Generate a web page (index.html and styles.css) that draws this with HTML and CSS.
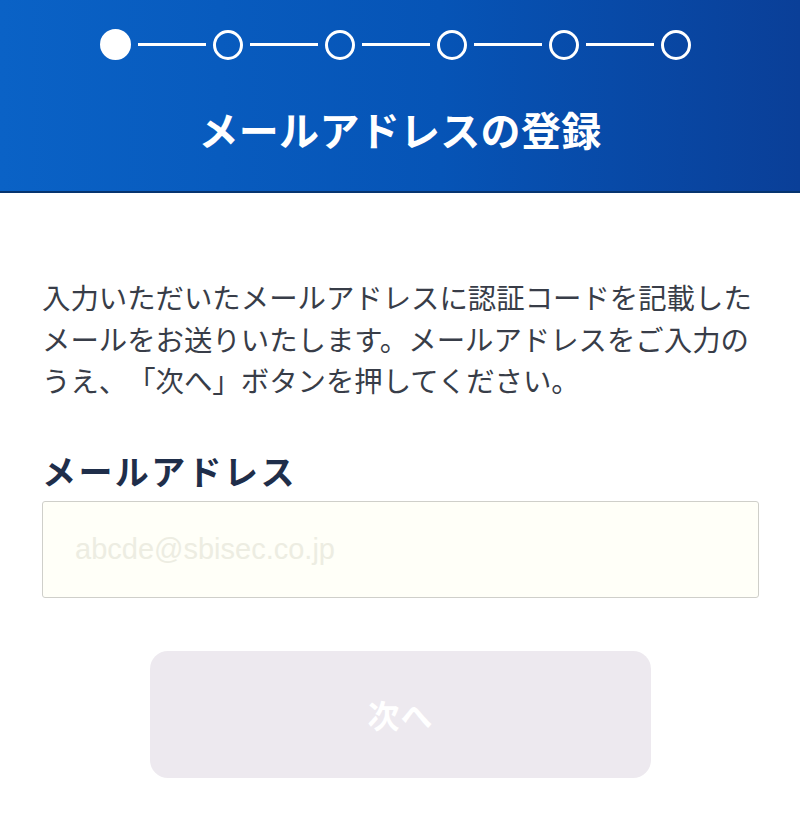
FILE: index.html
```html
<!DOCTYPE html>
<html lang="ja">
<head>
<meta charset="utf-8">
<title>メールアドレスの登録</title>
<link rel="stylesheet" href="styles.css">
</head>
<body>
<header class="hero">
  <div class="stepper">
    <span class="dot dot-active"></span><span class="bar"></span>
    <span class="dot"></span><span class="bar"></span>
    <span class="dot"></span><span class="bar"></span>
    <span class="dot"></span><span class="bar"></span>
    <span class="dot"></span><span class="bar"></span>
    <span class="dot"></span>
  </div>
  <h1 class="title">メールアドレスの登録</h1>
</header>
<main class="content">
  <p class="lead">入力いただいたメールアドレスに認証コードを記載したメールをお送りいたします。メールアドレスをご入力のうえ、「次へ」ボタンを押してください。</p>
  <label class="label" for="email">メールアドレス</label>
  <input class="field" id="email" type="email" placeholder="abcde@sbisec.co.jp">
  <div class="actions">
    <button class="next" type="button" disabled>次へ</button>
  </div>
</main>
</body>
</html>
```
FILE: styles.css
```css
* { box-sizing: border-box; }
html, body { margin: 0; padding: 0; background: #ffffff; }
body {
  font-family: "Noto Sans CJK JP", "Noto Sans", sans-serif;
  width: 800px;
}
.hero {
  height: 193px;
  background: linear-gradient(90deg, #0a62c6 0%, #0654b6 55%, #0a3f98 100%);
  border-bottom: 2px solid #06346f;
  padding-top: 29px;
  display: flex;
  flex-direction: column;
  align-items: center;
}
.stepper {
  display: flex;
  align-items: center;
  padding-right: 9px;
}
.dot {
  width: 30px;
  height: 30px;
  border-radius: 50%;
  border: 3.5px solid #ffffff;
  flex: none;
}
.dot-active { background: #ffffff; width: 31px; height: 31px; }
.bar {
  width: 68px;
  height: 3.5px;
  background: #ffffff;
  margin: 0 7px;
  flex: none;
}
.title {
  margin: 45px 0 0;
  color: #ffffff;
  font-size: 40px;
  line-height: 48px;
  font-weight: 700;
  letter-spacing: 0.3px;
}
.content {
  padding: 83px 41px 0 42px;
}
.lead {
  margin: 0;
  font-size: 28.4px;
  line-height: 41.5px;
  letter-spacing: 0;
  color: #383d48;
  text-spacing-trim: space-all;
}
.label {
  display: block;
  margin-top: 48px;
  font-size: 34px;
  line-height: 44px;
  font-weight: 700;
  letter-spacing: 2.4px;
  color: #1f2e4a;
}
.field {
  display: block;
  width: 717px;
  height: 97px;
  margin-top: 8px;
  border: 1.5px solid #cfcfca;
  border-radius: 3px;
  background: #fffff8;
  padding: 0 32px;
  font-family: "Liberation Sans", "Noto Sans CJK JP", sans-serif;
  font-size: 29px;
}
.field::placeholder { color: #edede2; }
.actions {
  display: flex;
  justify-content: center;
  margin-top: 53px;
}
.next {
  width: 501px;
  height: 127px;
  border: none;
  border-radius: 18px;
  background: #ede9ef;
  color: #ffffff;
  font-family: "Noto Sans CJK JP", sans-serif;
  font-size: 32px;
  font-weight: 700;
  letter-spacing: 1px;
}
```
